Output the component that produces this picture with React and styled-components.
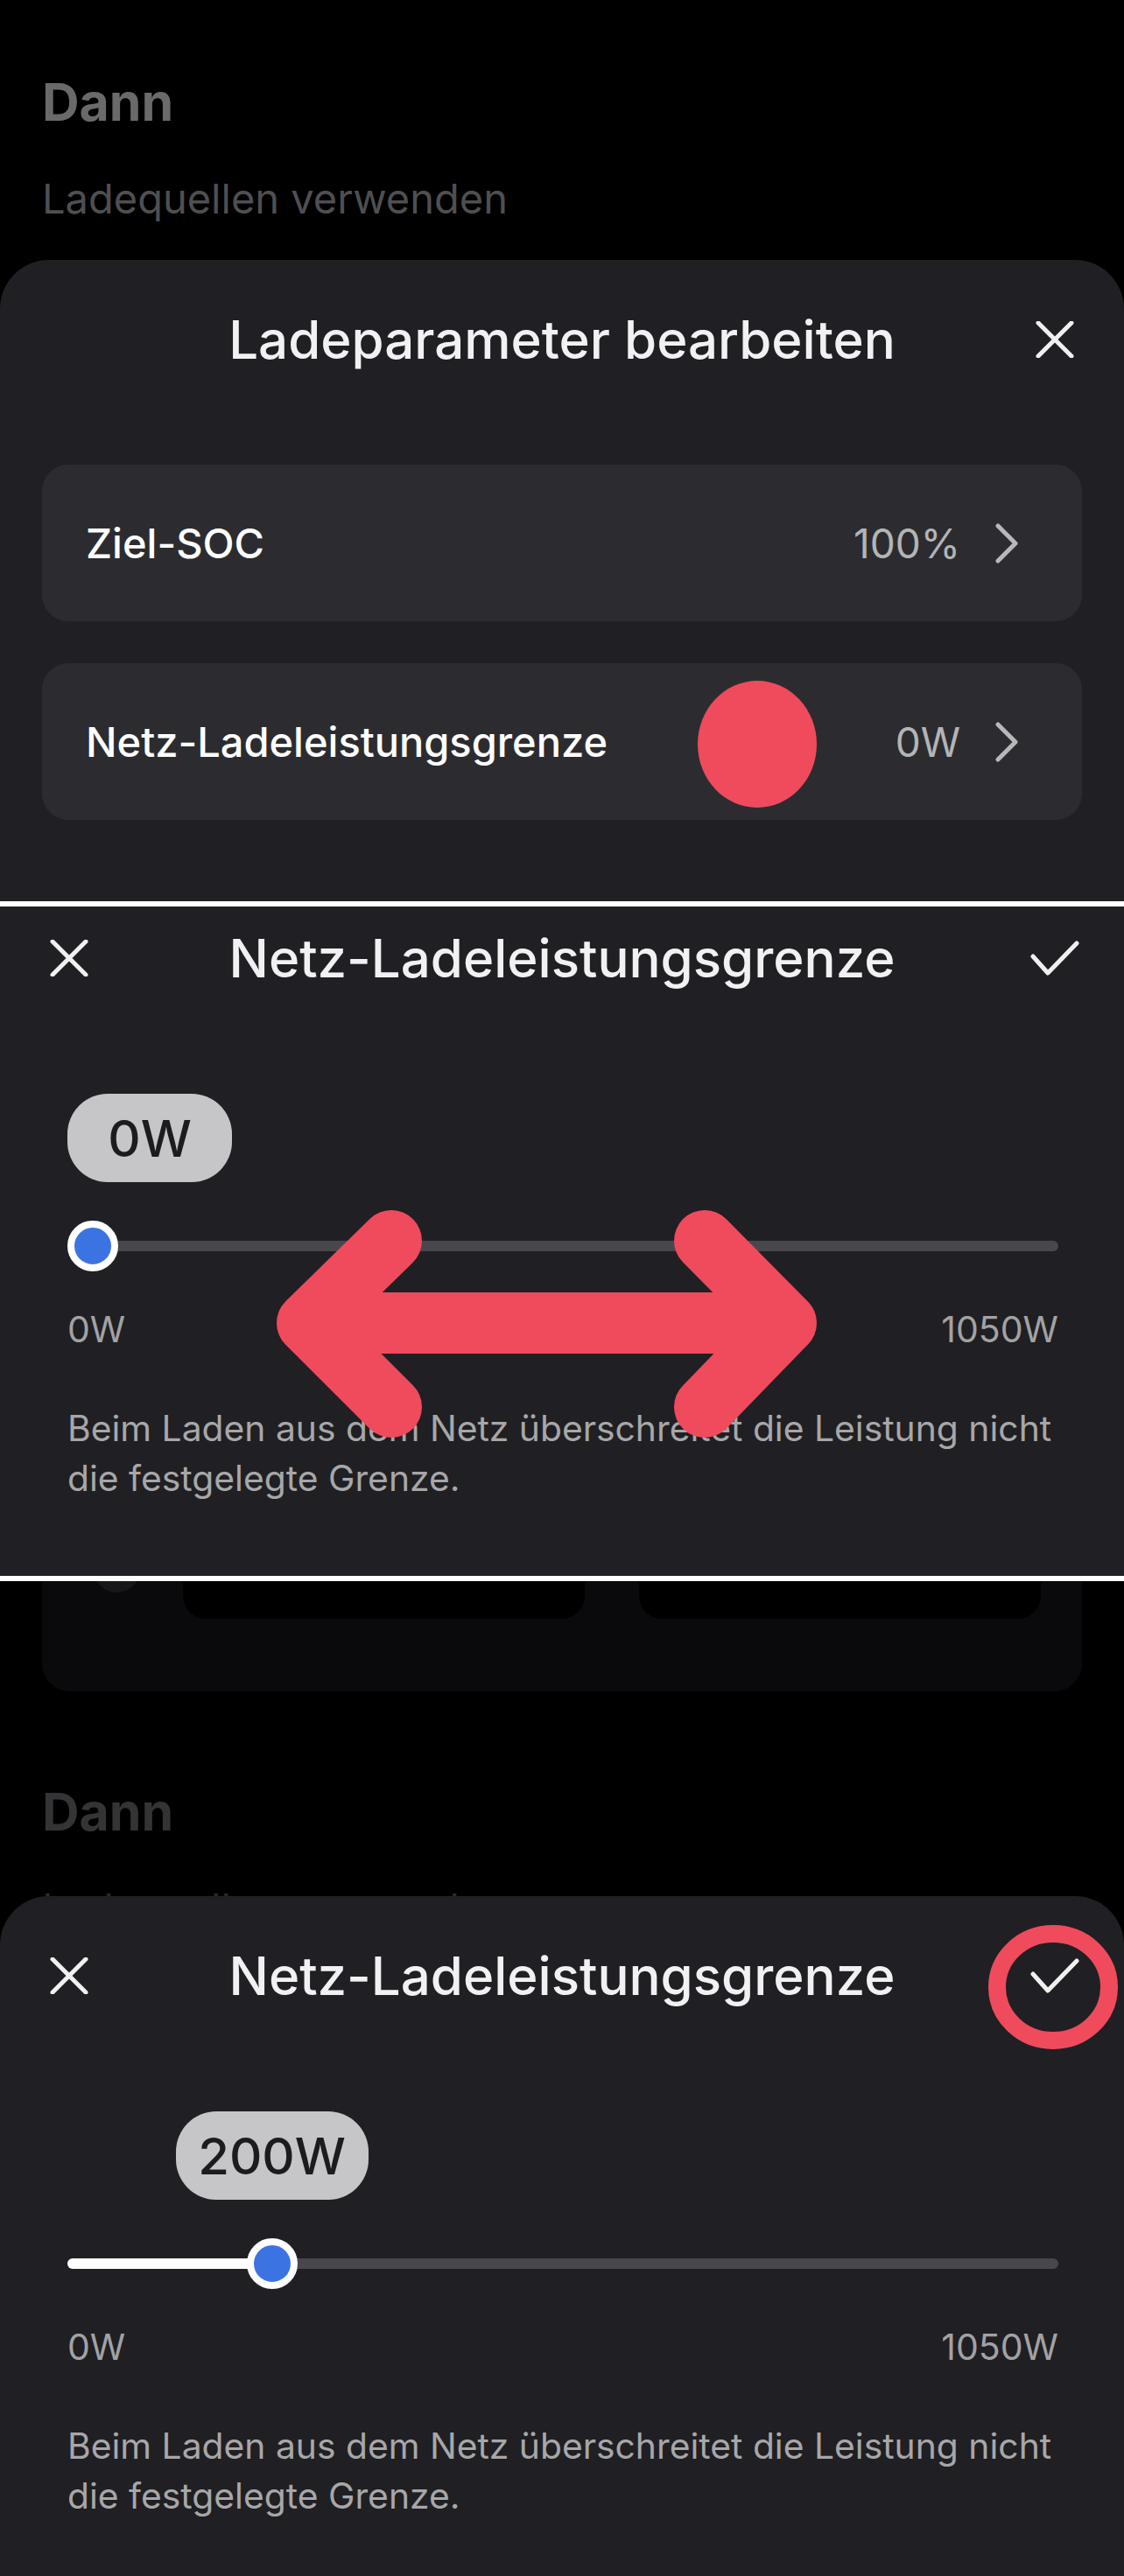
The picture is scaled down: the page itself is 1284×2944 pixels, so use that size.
import React from "react";
import styled, { createGlobalStyle } from "styled-components";

const GlobalStyle = createGlobalStyle`
  html, body {
    margin: 0;
    padding: 0;
    background: #000;
  }
  body {
    font-family: "Inter", "Roboto", "Noto Sans", sans-serif;
    -webkit-font-smoothing: antialiased;
  }
`;

const RED = "#ef4b5c";

const Page = styled.div`
  width: 1284px;
  height: 2944px;
  overflow: hidden;
  background: #000;
  display: flex;
  flex-direction: column;
`;

const Backdrop = styled.div`
  flex-shrink: 0;
  height: ${(p) => p.$height}px;
  padding-top: ${(p) => p.$top}px;
  box-sizing: border-box;
  overflow: hidden;
`;

const Heading = styled.div`
  padding-left: 48px;
  font-size: 59px;
  line-height: 70px;
  font-weight: 700;
  color: ${(p) => p.$color};
`;

const SubHeading = styled.div`
  margin-top: 45px;
  padding-left: 48px;
  font-size: 47px;
  line-height: 60px;
  color: ${(p) => p.$color};
`;

const FaintCard = styled.div`
  margin: 0 48px;
  height: 126px;
  border-radius: 0 0 32px 32px;
  background: #0a0a0d;
  display: flex;
  align-items: flex-start;
  padding-left: 59px;
  gap: 49px;
`;

const FaintDot = styled.div`
  width: 53px;
  height: 53px;
  margin-top: -40px;
  border-radius: 50%;
  background: #17171a;
`;

const FaintBox = styled.div`
  width: 459px;
  height: 43px;
  border-radius: 0 0 26px 26px;
  background: #000;
  & + & {
    margin-left: 13px;
  }
`;

const Sheet = styled.section`
  position: relative;
  flex: ${(p) => (p.$height ? "0 0 auto" : "1")};
  height: ${(p) => (p.$height ? `${p.$height}px` : "auto")};
  background: #201f23;
  border-radius: ${(p) => (p.$rounded ? "56px 56px 0 0" : "0")};
  overflow: hidden;
`;

const Divider = styled.div`
  flex-shrink: 0;
  height: 6px;
  background: #fff;
`;

const Header = styled.header`
  display: grid;
  grid-template-columns: 158px 1fr 158px;
  align-items: center;
  padding-top: ${(p) => p.$top}px;
`;

const Title = styled.h2`
  margin: 0;
  text-align: center;
  font-size: 60px;
  line-height: 80px;
  font-weight: 500;
  color: #f1f1f3;
  white-space: nowrap;
`;

const IconButton = styled.button`
  height: 80px;
  padding: 0;
  border: 0;
  background: none;
  display: flex;
  align-items: center;
  justify-content: center;
  color: #f0f0f0;
`;

const RowList = styled.div`
  display: flex;
  flex-direction: column;
  gap: 48px;
  padding: 103px 48px 0;
`;

const Row = styled.div`
  position: relative;
  height: 179px;
  border-radius: 30px;
  background: #2c2c30;
  display: flex;
  align-items: center;
  padding: 0 73px 0 50px;
`;

const RowLabel = styled.span`
  flex: 1;
  font-size: 47px;
  font-weight: 500;
  color: #fff;
`;

const RowValue = styled.span`
  font-size: 46px;
  color: #b4b4b6;
  margin-right: 40px;
`;

const Marker = styled.div`
  position: absolute;
  left: 749px;
  top: 20px;
  width: 136px;
  height: 145px;
  border-radius: 50%;
  background: ${RED};
`;

const SliderBody = styled.div`
  padding: 115px 75px 0 77px;
`;

const Bubble = styled.div`
  width: ${(p) => p.$width}px;
  height: 101px;
  border-radius: 46px;
  background: #c6c6c8;
  color: #1c1c1e;
  font-size: 58px;
  font-weight: 500;
  display: flex;
  align-items: center;
  justify-content: center;
`;

const SliderRow = styled.div`
  margin-top: 43px;
  height: 60px;
  display: flex;
  align-items: center;
`;

const Track = styled.div`
  position: relative;
  width: 100%;
  height: 12px;
  border-radius: 6px;
  background: #48484c;
`;

const Fill = styled.div`
  position: absolute;
  left: 0;
  top: 0;
  height: 100%;
  border-radius: 6px;
  background: #fff;
`;

const Thumb = styled.div`
  position: absolute;
  top: 50%;
  width: 42px;
  height: 42px;
  border: 8px solid #fff;
  border-radius: 50%;
  background: #3b74e2;
  transform: translate(-50%, -50%);
`;

const RangeLabels = styled.div`
  margin-top: 40px;
  display: flex;
  justify-content: space-between;
  font-size: 41px;
  line-height: 50px;
  color: #a2a2a4;
`;

const Note = styled.p`
  margin: 60px 0 0;
  font-size: 40.8px;
  line-height: 57px;
  color: #a7a7a9;
  white-space: nowrap;
`;

const Overlay = styled.svg`
  position: absolute;
  left: 0;
  top: 0;
  pointer-events: none;
`;

const Ring = styled.svg`
  position: absolute;
  left: 1128px;
  top: 32px;
  pointer-events: none;
`;

const CloseIcon = () => (
  <svg width="44" height="42" viewBox="0 0 44 42" fill="none" stroke="currentColor" strokeWidth="5" strokeLinecap="round">
    <path d="M3 2 L41 40 M41 2 L3 40" />
  </svg>
);

const CheckIcon = () => (
  <svg width="56" height="40" viewBox="0 0 56 40" fill="none" stroke="currentColor" strokeWidth="5" strokeLinecap="round" strokeLinejoin="round">
    <path d="M3 18 L20 37 L53 3" />
  </svg>
);

const Chevron = () => (
  <svg width="26" height="46" viewBox="0 0 26 46" fill="none" stroke="#b8b8ba" strokeWidth="5" strokeLinecap="round" strokeLinejoin="round">
    <path d="M3 3 L23 23 L3 43" />
  </svg>
);

const TRACK_WIDTH = 1132;
const THUMB = 58;

function PowerSlider({ value, max }) {
  const center = THUMB / 2 + (value / max) * (TRACK_WIDTH - THUMB);
  const label = `${value}W`;
  const bubbleWidth = Math.max(188, 52 + label.length * 42);
  const offset = Math.max(0, center - bubbleWidth / 2);
  return (
    <SliderBody>
      <Bubble $width={bubbleWidth} style={{ marginLeft: offset }}>
        {label}
      </Bubble>
      <SliderRow>
        <Track>
          {value > 0 && <Fill style={{ width: center }} />}
          <Thumb style={{ left: center }} />
        </Track>
      </SliderRow>
      <RangeLabels>
        <span>0W</span>
        <span>{max}W</span>
      </RangeLabels>
      <Note>
        Beim Laden aus dem Netz überschreitet die Leistung nicht
        <br />
        die festgelegte Grenze.
      </Note>
    </SliderBody>
  );
}

function LimitHeader({ top }) {
  return (
    <Header $top={top}>
      <IconButton>
        <CloseIcon />
      </IconButton>
      <Title>Netz-Ladeleistungsgrenze</Title>
      <IconButton>
        <CheckIcon />
      </IconButton>
    </Header>
  );
}

export default function App() {
  return (
    <Page>
      <GlobalStyle />

      <Backdrop $height={297} $top={82}>
        <Heading $color="#6a6a6c">Dann</Heading>
        <SubHeading $color="#4f4f51">Ladequellen verwenden</SubHeading>
      </Backdrop>

      <Sheet $rounded $height={733}>
        <Header $top={51}>
          <span />
          <Title>Ladeparameter bearbeiten</Title>
          <IconButton>
            <CloseIcon />
          </IconButton>
        </Header>
        <RowList>
          <Row>
            <RowLabel>Ziel-SOC</RowLabel>
            <RowValue>100%</RowValue>
            <Chevron />
          </Row>
          <Row>
            <RowLabel>Netz-Ladeleistungsgrenze</RowLabel>
            <Marker />
            <RowValue>0W</RowValue>
            <Chevron />
          </Row>
        </RowList>
      </Sheet>

      <Divider />

      <Sheet $height={765}>
        <LimitHeader top={19} />
        <PowerSlider value={0} max={1050} />
        <Overlay width="1284" height="765" viewBox="0 0 1284 765">
          <path
            d="M447 382 L351 476 L447 572 M351 476 L898 476 M805 382 L898 476 L805 572"
            fill="none"
            stroke={RED}
            strokeWidth="70"
            strokeLinecap="round"
            strokeLinejoin="round"
          />
        </Overlay>
      </Sheet>

      <Divider />

      <Backdrop $height={360} $top={0}>
        <FaintCard>
          <FaintDot />
          <FaintBox />
          <FaintBox />
        </FaintCard>
        <Heading $color="#343436" style={{ marginTop: 103 }}>
          Dann
        </Heading>
        <SubHeading $color="#2a2a2c">Ladequellen verwenden</SubHeading>
      </Backdrop>

      <Sheet $rounded>
        <LimitHeader top={51} />
        <PowerSlider value={200} max={1050} />
        <Ring width="150" height="144" viewBox="0 0 150 144">
          <ellipse cx="75" cy="72" rx="64" ry="61" fill="none" stroke={RED} strokeWidth="20" />
        </Ring>
      </Sheet>
    </Page>
  );
}
